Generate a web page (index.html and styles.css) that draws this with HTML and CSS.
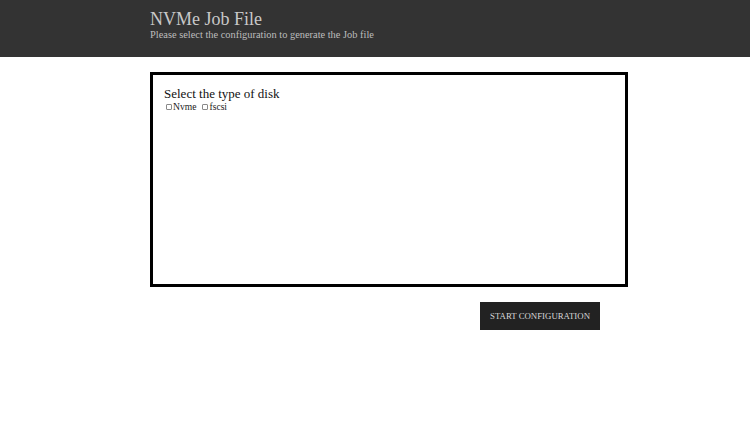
FILE: index.html
```html
<!DOCTYPE html>
<html>
<head>
<meta charset="utf-8">
<link rel="stylesheet" href="styles.css">
</head>
<body>
<header class="header">
  <div class="header-inner">
    <h1 class="title">NVMe Job File</h1>
    <p class="subtitle">Please select the configuration to generate the Job file</p>
  </div>
</header>
<main class="main">
  <section class="panel">
    <h2 class="panel-title">Select the type of disk</h2>
    <div class="options">
      <label class="opt"><input type="checkbox" class="cb">Nvme</label>
      <label class="opt"><input type="checkbox" class="cb">fscsi</label>
    </div>
  </section>
  <div class="actions">
    <button class="btn">START CONFIGURATION</button>
  </div>
</main>
</body>
</html>
```
FILE: styles.css
```css
* { box-sizing: border-box; }
html, body { margin: 0; padding: 0; background: #fff; }
body { font-family: "Liberation Serif", "Times New Roman", serif; color: #111; }
.header { background: #333333; height: 57px; padding-left: 150px; padding-top: 9px; }
.title { margin: 0; font-weight: normal; font-size: 18px; line-height: 20px; color: #c8c8c8; }
.subtitle { margin: 0; font-size: 10.4px; line-height: 11px; color: #bdbdbd; }
.main { padding: 15px 0 0 150px; width: 628px; }
.panel { border: 3px solid #000; height: 215px; padding: 12px 11px; }
.panel-title { margin: 0; font-weight: normal; font-size: 13px; line-height: 14px; color: #111; }
.options { display: flex; gap: 4px; font-size: 9.6px; line-height: 11px; color: #222; }
.opt { display: flex; align-items: center; }
.cb { -webkit-appearance: none; appearance: none; width: 6px; height: 6px; margin: 0 1px 0 2px; border: 1px solid #8a8a8a; border-radius: 1px; background: #fff; }
.actions { display: flex; justify-content: flex-end; padding-right: 28px; margin-top: 15px; }
.btn { width: 120px; height: 28px; background: #222; color: #d8d8d8; border: none; font-family: "Liberation Serif", serif; font-size: 8.8px; padding: 0; }
```
